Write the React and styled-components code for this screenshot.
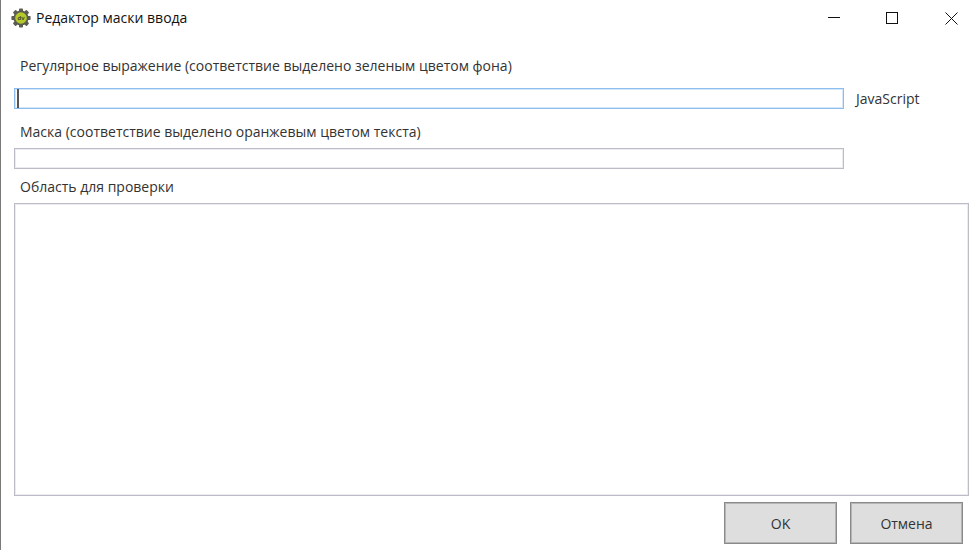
import React from 'react';
import styled, { createGlobalStyle } from 'styled-components';

const Global = createGlobalStyle`
    html, body {
        margin: 0;
        padding: 0;
        background: #fff;
    }
`;

const App = () => {
    return (
        <Win>
            <Global />
            <TitleBar>
                <GearIcon />
                <Title>Редактор маски ввода</Title>
                <WinButtons>
                    <WinBtn>
                        <svg width="12" height="12" viewBox="0 0 12 12"><path d="M0 5.5H12" stroke="#111" fill="none" /></svg>
                    </WinBtn>
                    <WinBtn>
                        <svg width="12" height="12" viewBox="0 0 12 12"><rect x="0.5" y="0.5" width="11" height="11" stroke="#111" fill="none" /></svg>
                    </WinBtn>
                    <WinBtn>
                        <svg width="13" height="13" viewBox="0 0 13 13"><path d="M0.5 0.5L12.5 12.5M12.5 0.5L0.5 12.5" stroke="#111" fill="none" /></svg>
                    </WinBtn>
                </WinButtons>
            </TitleBar>
            <Body>
                <Label $top={21} $bottom={13}>Регулярное выражение (соответствие выделено зеленым цветом фона)</Label>
                <InputRow>
                    <Field $focused><Caret /></Field>
                    <Lang>JavaScript</Lang>
                </InputRow>
                <Label $top={14} $bottom={7}>Маска (соответствие выделено оранжевым цветом текста)</Label>
                <InputRow>
                    <Field />
                </InputRow>
                <Label $top={9} $bottom={7}>Область для проверки</Label>
                <TestArea />
                <Footer>
                    <Button>OK</Button>
                    <Button>Отмена</Button>
                </Footer>
            </Body>
        </Win>
    );
};

const GearIcon = () => (
    <svg width="20" height="20" viewBox="0 0 20 20">
        <g fill="#5c5c50">
            <circle cx="10" cy="10" r="7.6" />
            {[0, 45, 90, 135, 180, 225, 270, 315].map((a) => (
                <rect key={a} x="8" y="0.4" width="4" height="4" rx="0.8" transform={`rotate(${a} 10 10)`} />
            ))}
        </g>
        <circle cx="10" cy="10" r="5.8" fill="#b5c92a" />
        <text x="10" y="12" textAnchor="middle" fontSize="6" fontWeight="700" fill="#4a4a30" fontFamily="Open Sans, sans-serif">dv</text>
    </svg>
);

export default App;

const Win = styled.div`
    width: 980px;
    height: 550px;
    box-sizing: border-box;
    border-left: 1px solid #7a7a7a;
    background: #fff;
    overflow: hidden;
    font-family: "Open Sans", "Noto Sans", sans-serif;
    color: #333;
`;

const TitleBar = styled.div`
    height: 36px;
    display: flex;
    align-items: center;
    padding-left: 10px;
    gap: 5px;
`;

const Title = styled.div`
    font-size: 14px;
    color: #111;
    padding-bottom: 2px;
`;

const WinButtons = styled.div`
    margin-left: auto;
    display: flex;
`;

const WinBtn = styled.div`
    width: 58px;
    height: 36px;
    display: flex;
    align-items: center;
    justify-content: center;

    &:last-child {
        margin-left: 1px;
    }
`;

const Body = styled.div`
    padding: 0 11px 0 13px;
`;

const Label = styled.div`
    font-size: 14px;
    line-height: 18px;
    padding-left: 6px;
    margin-top: ${(p) => p.$top}px;
    margin-bottom: ${(p) => p.$bottom}px;
    color: #333;
`;

const InputRow = styled.div`
    display: flex;
    align-items: center;
    gap: 12px;
`;

const Field = styled.div`
    width: 830px;
    height: 21px;
    box-sizing: border-box;
    border: 1px solid ${(p) => (p.$focused ? '#8dbcee' : '#bcbcc6')};
    box-shadow: inset 0 0 0 1px ${(p) => (p.$focused ? '#d6e7f9' : '#ececf0')};
    display: flex;
    align-items: center;
    padding-left: 2px;
`;

const Caret = styled.div`
    width: 2px;
    height: 19px;
    background: #555;
`;

const Lang = styled.div`
    font-size: 14px;
    color: #333;
`;

const TestArea = styled.div`
    height: 293px;
    box-sizing: border-box;
    border: 1px solid #bcbcc6;
    box-shadow: inset 0 0 0 1px #ececf0;
`;

const Footer = styled.div`
    display: flex;
    justify-content: flex-end;
    gap: 13px;
    margin-top: 6px;
    padding-right: 6px;
`;

const Button = styled.div`
    width: 113px;
    height: 42px;
    box-sizing: border-box;
    background: #dedede;
    border: 1px solid #8a8a8a;
    box-shadow: inset 0 0 0 1px #b5b5b5;
    display: flex;
    align-items: center;
    justify-content: center;
    font-size: 14px;
    color: #333;
`;
